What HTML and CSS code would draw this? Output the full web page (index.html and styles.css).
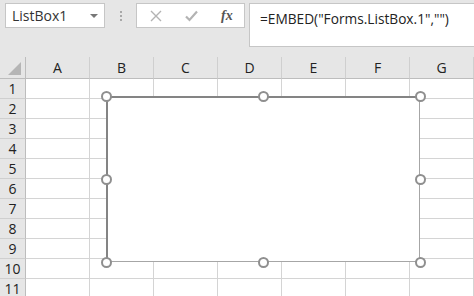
FILE: index.html
```html
<!DOCTYPE html>
<html lang="en">
<head>
  <meta charset="UTF-8" />
  <title>ListBox1</title>
  <link rel="stylesheet" href="styles.css">
</head>
<body>

  <div class="toolbar">
    <div class="name-box">
      <span class="name-text">ListBox1</span>
      <span class="name-arrow"></span>
    </div>
    <div class="grip"><i></i><i></i><i></i></div>
    <div class="fx-buttons">
      <svg class="fx-icon" width="12" height="12" viewBox="0 0 12 12">
        <path d="M1 1 L11 11 M11 1 L1 11" stroke="#b3b3b3" stroke-width="1.4" fill="none"/>
      </svg>
      <svg class="fx-icon" width="13" height="12" viewBox="0 0 13 12">
        <path d="M1 6.5 L4.5 10 L12 1.5" stroke="#b3b3b3" stroke-width="2.2" fill="none"/>
      </svg>
      <span class="fx-label">fx</span>
    </div>
    <div class="formula">=EMBED("Forms.ListBox.1","")</div>
  </div>

  <div class="sheet">
    <div class="grid" id="grid"></div>

    <div class="listbox"></div>
    <span class="handle" style="left:106px;top:96px"></span>
    <span class="handle" style="left:263px;top:96px"></span>
    <span class="handle" style="left:420px;top:96px"></span>
    <span class="handle" style="left:106px;top:179px"></span>
    <span class="handle" style="left:420px;top:179px"></span>
    <span class="handle" style="left:106px;top:262px"></span>
    <span class="handle" style="left:263px;top:262px"></span>
    <span class="handle" style="left:420px;top:262px"></span>
  </div>

  <script>
    const grid = document.getElementById('grid');
    const cols = ['A', 'B', 'C', 'D', 'E', 'F', 'G'];

    const corner = document.createElement('div');
    corner.className = 'corner';
    corner.innerHTML = '<span class="tri"></span>';
    grid.appendChild(corner);

    cols.forEach(c => {
      const h = document.createElement('div');
      h.className = 'col-head';
      h.innerText = c;
      grid.appendChild(h);
    });

    for (let r = 1; r <= 11; r++) {
      const rh = document.createElement('div');
      rh.className = 'row-head';
      rh.innerText = r;
      grid.appendChild(rh);
      cols.forEach(() => {
        const cell = document.createElement('div');
        cell.className = 'cell';
        grid.appendChild(cell);
      });
    }
  </script>
</body>
</html>
```

FILE: styles.css
```css
body {
  margin: 0;
  padding: 0;
  width: 474px;
  height: 296px;
  overflow: hidden;
  background: #e6e6e6;
  font-family: 'Open Sans', 'Noto Sans', sans-serif;
  color: #222;
}
.toolbar {
  display: flex;
  align-items: flex-start;
  padding: 3px 0 0 5px;
  height: 54px;
  box-sizing: border-box;
}
.name-box {
  width: 100px;
  height: 25px;
  box-sizing: border-box;
  background: white;
  border: 1px solid #c6c6c6;
  display: flex;
  align-items: center;
  justify-content: space-between;
  padding: 0 6px 0 6px;
}
.name-text {
  font-size: 14px;
  color: #333;
}
.name-arrow {
  width: 0;
  height: 0;
  border-left: 4px solid transparent;
  border-right: 4px solid transparent;
  border-top: 4px solid #777;
}
.grip {
  width: 31px;
  height: 25px;
  display: flex;
  flex-direction: column;
  align-items: center;
  justify-content: center;
  gap: 2px;
}
.grip i {
  width: 2px;
  height: 2px;
  background: #a8a8a8;
}
.fx-buttons {
  width: 109px;
  height: 25px;
  box-sizing: border-box;
  background: white;
  border: 1px solid #c6c6c6;
  display: flex;
  align-items: center;
  padding-left: 13px;
  gap: 23px;
}
.fx-label {
  font-family: 'Liberation Serif', serif;
  font-style: italic;
  font-weight: bold;
  font-size: 14px;
  color: #555;
}
.formula {
  margin-left: 4px;
  flex: 1;
  height: 44px;
  box-sizing: border-box;
  background: white;
  border: 1px solid #c6c6c6;
  border-right: none;
  font-size: 13.7px;
  padding: 5px 0 0 10px;
  color: #222;
}
.sheet {
  position: relative;
  margin-top: 3px;
}
.grid {
  display: grid;
  grid-template-columns: 26px repeat(7, 64px);
  grid-template-rows: 22px repeat(11, 20px);
}
.corner, .col-head, .row-head, .cell {
  box-sizing: border-box;
  border-right: 1px solid #d4d4d4;
  border-bottom: 1px solid #d4d4d4;
}
.corner {
  position: relative;
  border-right: 1px solid #bdbdbd;
  border-bottom: 1px solid #bdbdbd;
}
.tri {
  position: absolute;
  right: 4px;
  bottom: 3px;
  width: 0;
  height: 0;
  border-left: 13px solid transparent;
  border-bottom: 13px solid #b5b5b5;
}
.col-head {
  background: #e6e6e6;
  border-bottom: 1px solid #bdbdbd;
  border-right: 1px solid #cfcfcf;
  text-align: center;
  font-size: 14px;
  line-height: 21px;
}
.row-head {
  background: #e6e6e6;
  border-right: 1px solid #bdbdbd;
  border-bottom: 1px solid #cfcfcf;
  text-align: center;
  font-size: 14px;
  line-height: 19px;
}
.cell {
  background: white;
}
.listbox {
  position: absolute;
  left: 106px;
  top: 39px;
  width: 314px;
  height: 166px;
  box-sizing: border-box;
  background: white;
  border-left: 2px solid #848484;
  border-top: 2px solid #848484;
  border-right: 1px solid #a6a6a6;
  border-bottom: 1px solid #a6a6a6;
}
.handle {
  position: absolute;
  width: 11px;
  height: 11px;
  margin: -62px 0 0 -5px;
  box-sizing: border-box;
  border: 2px solid #8f8f8f;
  border-radius: 50%;
  background: white;
}
```
